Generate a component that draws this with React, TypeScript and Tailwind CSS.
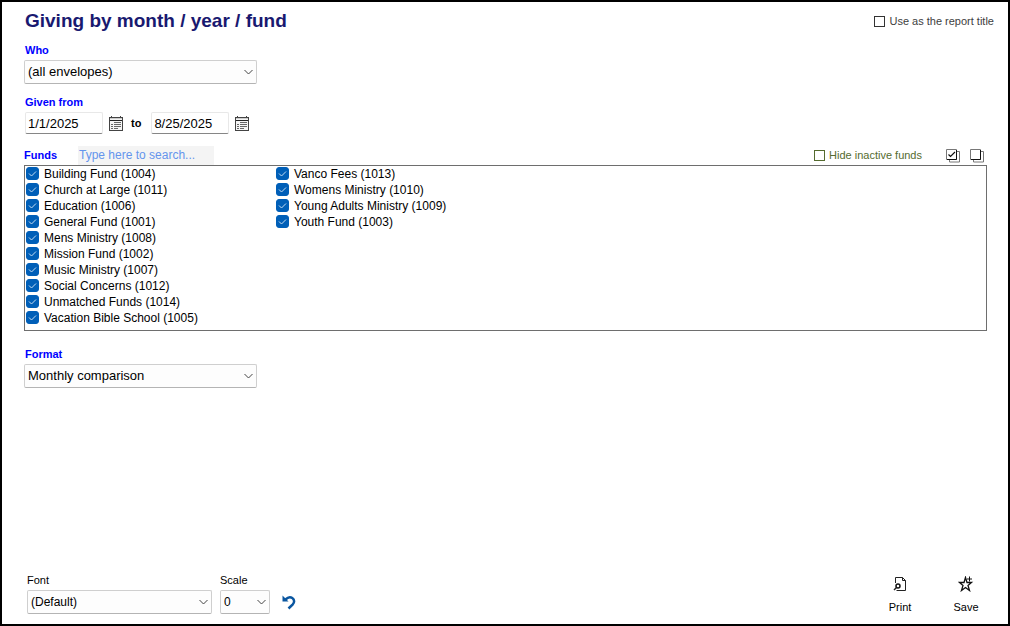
import React, { useState } from 'react';

const FUNDS = [
  'Building Fund (1004)',
  'Church at Large (1011)',
  'Education (1006)',
  'General Fund (1001)',
  'Mens Ministry (1008)',
  'Mission Fund (1002)',
  'Music Ministry (1007)',
  'Social Concerns (1012)',
  'Unmatched Funds (1014)',
  'Vacation Bible School (1005)',
  'Vanco Fees (1013)',
  'Womens Ministry (1010)',
  'Young Adults Ministry (1009)',
  'Youth Fund (1003)',
];

const CalendarIcon = () => (
  <svg width="14" height="15" viewBox="0 0 14 15" fill="none" shapeRendering="crispEdges">
    <path d="M0.5 1.5h13v13H0.5z" fill="#f4f4f4" stroke="#444" />
    <path d="M1 2.5h12" stroke="#ccc" />
    <path d="M1 4.5h12" stroke="#222" />
    <path d="M2.5 0v2M11.5 0v2" stroke="#444" />
    <path d="M5 6.500h7M2 8.500h2M5 8.500h7M2 10.500h2M5 10.500h7M2 12.500h2M5 12.500h4" stroke="#666" />
  </svg>
);

const StackIcon = ({ checked = false }: { checked?: boolean }) => (
  <svg width="14" height="14" viewBox="0 0 14 14" fill="none">
    <path d="M11 2.5h2.500v10.500H3.5V11" stroke="#777" />
    <path d="M0.5 0.5h10v10H0.5z" fill="#fff" stroke="#777" />
    <path d="M10.5 1v9.5H1" stroke="#111" />
    {checked && <path d="M2.5 5.5l2 2 4.5-4.5" stroke="#111" strokeWidth="1.2" />}
  </svg>
);

const UndoIcon = () => (
  <svg width="14" height="15" viewBox="0 0 14 15" fill="none">
    <path d="M3.500 4.500C6 2 8.500 1.800 10.300 3c2.300 1.600 2.300 4.200 0.500 6.300L6.500 13.500" stroke="#0a56a0" strokeWidth="2.500" />
    <path d="M0.500 0.500v6h6z" fill="#0a56a0" />
  </svg>
);

const PrintIcon = () => (
  <svg width="14" height="16" viewBox="0 0 14 16" fill="none" stroke="#222">
    <path d="M2.500 7V1.500h7l3 3v10h-9" />
    <path d="M9.500 1.500v3h3" />
    <circle cx="5" cy="10" r="2" stroke="#111" strokeWidth="1.500" />
    <path d="M3.500 11.500L1 14" strokeWidth="1.500" />
  </svg>
);

const SaveIcon = () => (
  <svg width="16" height="16" viewBox="0 0 16 16" fill="none" stroke="#111">
    <path d="M7.500 1.500L6 6.500H1.500L5 9.500l-1.500 5 4-3 4 3-1.500-5 3.500-3H9z" strokeWidth="1.300" />
    <path d="M11.500 0.500v5M9 3h5" />
  </svg>
);

type SelectProps = { id: string; options: string[]; className: string };

const Select = ({ id, options, className }: SelectProps) => (
  <div className="relative w-fit">
    <select
      id={id}
      className={`block h-6 appearance-none rounded-xs border border-[#cfcfcf] border-b-[#b4b4b4] bg-[#fdfdfd] pl-[3px] pr-5 text-black outline-none ${className}`}
    >
      {options.map((option) => (
        <option key={option}>{option}</option>
      ))}
    </select>
    <svg className="pointer-events-none absolute right-1 top-2" width="9" height="8" viewBox="0 0 9 8" fill="none" stroke="#444">
      <path d="M0.500 2l4 4 4-4" />
    </svg>
  </div>
);

const FundItem = ({ name }: { name: string }) => {
  const [checked, setChecked] = useState(true);
  return (
    <label className="flex h-4 items-center gap-[5px] whitespace-nowrap pb-px pl-px text-[12px]">
      <span className="grid place-items-center">
        <input
          type="checkbox"
          checked={checked}
          onChange={() => setChecked(!checked)}
          className="col-start-1 row-start-1 size-[13px] appearance-none rounded-[3px] border border-[#005fb8] checked:bg-[#005fb8]"
        />
        <svg className="pointer-events-none col-start-1 row-start-1" width="9" height="7" viewBox="0 0 9 7" fill="none" stroke="#c4dcf2">
          <path d="M1 3.500L3.500 6 8 1.500" />
        </svg>
      </span>
      {name}
    </label>
  );
};

const sectionLabel = 'flex h-5 items-center pl-px text-[11px] font-bold text-[#0000ff]';
const dateInput =
  'h-[22px] w-[78px] rounded-xs border border-[#e8e8e8] border-b-[#868686] bg-white pl-[2px] text-[13px] text-black outline-none';

const App: React.FC = () => {
  return (
    <div className="flex min-h-screen flex-col border-2 border-black bg-white font-['Liberation_Sans',Arial,sans-serif] text-black">
      {/* Title bar */}
      <header className="flex h-[38px] items-center justify-between pl-[23px] pr-3.5">
        <h1 className="text-[19px] font-bold text-[#191970]">Giving by month / year / fund</h1>
        <label className="flex items-center gap-1 text-[11px] text-[#404040]">
          <input type="checkbox" className="size-[11px] appearance-none border border-[#333] bg-white checked:bg-[#333]" />
          Use as the report title
        </label>
      </header>

      <main className="pl-[22px] pr-[21px]">
        <label htmlFor="who" className={sectionLabel}>Who</label>
        <Select id="who" options={['(all envelopes)']} className="w-[233px] text-[13px]" />

        {/* Date range */}
        <label htmlFor="from" className={`mt-2 ${sectionLabel}`}>Given from</label>
        <div className="flex items-center pl-px">
          <input id="from" type="text" defaultValue="1/1/2025" className={dateInput} />
          <button type="button" aria-label="Pick start date" className="ml-1.5">
            <CalendarIcon />
          </button>
          <label htmlFor="to" className="ml-2 mr-2.5 text-[11px] font-bold">to</label>
          <input id="to" type="text" defaultValue="8/25/2025" className={dateInput} />
          <button type="button" aria-label="Pick end date" className="ml-1.5">
            <CalendarIcon />
          </button>
        </div>

        {/* Funds */}
        <div className="mt-3 flex h-[19px] items-center">
          <label htmlFor="search" className="w-[54px] text-[11px] font-bold text-[#0000ff]">Funds</label>
          <input
            id="search"
            type="text"
            placeholder="Type here to search..."
            className="h-full w-[136px] bg-[#f4f4f4] pb-px pl-px text-[12px] outline-none placeholder:text-[#6495ed]"
          />
          <label className="ml-auto flex items-center gap-1 text-[11px] text-[#556b2f]">
            <input type="checkbox" className="size-[11px] appearance-none border border-[#556b2f] bg-white checked:bg-[#556b2f]" />
            Hide inactive funds
          </label>
          <button type="button" aria-label="Select all" className="ml-6">
            <StackIcon checked />
          </button>
          <button type="button" aria-label="Clear all" className="ml-2.5 mr-[3px]">
            <StackIcon />
          </button>
        </div>
        <div className="grid auto-cols-[250px] grid-flow-col grid-rows-10 border border-[#6e6e6e] pb-1">
          {FUNDS.map((fund) => (
            <FundItem key={fund} name={fund} />
          ))}
        </div>

        <label htmlFor="format" className={`mt-[13px] ${sectionLabel}`}>Format</label>
        <Select id="format" options={['Monthly comparison']} className="w-[233px] text-[13px]" />
      </main>

      {/* Bottom bar */}
      <footer className="mt-auto flex items-end pb-2.5 pl-[25px] pr-[18px]">
        <div className="mr-2">
          <label htmlFor="font" className="flex h-5 items-center text-[11px]">Font</label>
          <Select id="font" options={['(Default)']} className="w-[185px] text-[12px]" />
        </div>
        <div>
          <label htmlFor="scale" className="flex h-5 items-center text-[11px]">Scale</label>
          <Select id="scale" options={['0']} className="w-[50px] text-[12px]" />
        </div>
        <button type="button" aria-label="Reset" className="mb-1 ml-3">
          <UndoIcon />
        </button>
        <button type="button" className="ml-auto flex w-12 flex-col items-center gap-2 text-[11px] leading-[14px]">
          <PrintIcon />
          Print
        </button>
        <button type="button" className="ml-[18px] flex w-12 flex-col items-center gap-2 text-[11px] leading-[14px]">
          <SaveIcon />
          Save
        </button>
      </footer>
    </div>
  );
};

export default App;
